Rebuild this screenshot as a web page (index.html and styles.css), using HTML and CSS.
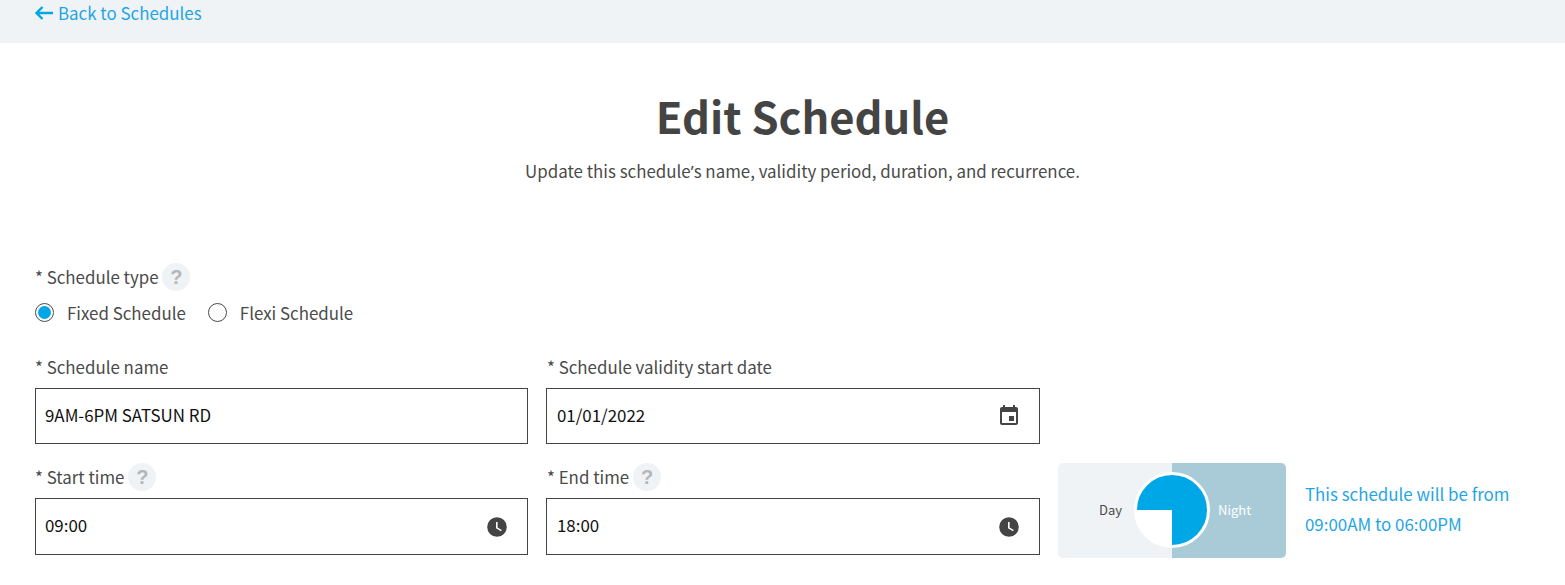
FILE: index.html
```html
<!DOCTYPE html>
<html lang="en">
<head>
    <meta charset="UTF-8">
    <title>Edit Schedule</title>
    <link rel="stylesheet" href="styles.css">
</head>
<body>
    <div class="topbar">
        <a class="back" href="javascript:;">
            <svg class="back-arrow" width="18" height="14" viewBox="0 0 18 14"><path d="M7.5 1 L1.5 7 L7.5 13 M1.5 7 H18" fill="none" stroke="#00a7e6" stroke-width="2.4"/></svg>
            <span>Back to Schedules</span>
        </a>
    </div>
    <div class="head">
        <h1>Edit Schedule</h1>
        <p>Update this schedule<span class="apos">’</span>s name, validity period, duration, and recurrence.</p>
    </div>
    <form class="form">
        <div class="label type-label">* Schedule type <span class="help">?</span></div>
        <div class="radios">
            <label class="radio"><span class="dot checked"></span>Fixed Schedule</label>
            <label class="radio"><span class="dot"></span>Flexi Schedule</label>
        </div>
        <div class="row row-name">
            <div class="field">
                <div class="label">* Schedule name</div>
                <div class="input">9AM-6PM SATSUN RD</div>
            </div>
            <div class="field">
                <div class="label">* Schedule validity start date</div>
                <div class="input">01/01/2022
                    <svg class="icon" width="24" height="24" viewBox="0 0 24 24"><path fill="#444" d="M17 12h-5v5h5v-5zM16 1v2H8V1H6v2H5c-1.11 0-1.99.9-1.99 2L3 19c0 1.1.89 2 2 2h14c1.1 0 2-.9 2-2V5c0-1.1-.9-2-2-2h-1V1h-2zm3 18H5V8h14v11z"/></svg>
                </div>
            </div>
        </div>
        <div class="row row-time">
            <div class="field">
                <div class="label">* Start time <span class="help">?</span></div>
                <div class="input tall">09:00
                    <svg class="icon" width="24" height="24" viewBox="0 0 24 24"><path fill="#444" d="M12 2.2a9.8 9.8 0 1 0 0 19.6 9.8 9.8 0 0 0 0-19.6zm4 14.1-5-3V7h1.6v5.4l4.2 2.5-.8 1.4z"/></svg>
                </div>
            </div>
            <div class="field">
                <div class="label">* End time <span class="help">?</span></div>
                <div class="input tall">18:00
                    <svg class="icon" width="24" height="24" viewBox="0 0 24 24"><path fill="#444" d="M12 2.2a9.8 9.8 0 1 0 0 19.6 9.8 9.8 0 0 0 0-19.6zm4 14.1-5-3V7h1.6v5.4l4.2 2.5-.8 1.4z"/></svg>
                </div>
            </div>
            <div class="clock">
                <div class="side day">Day</div>
                <div class="side night">Night</div>
                <div class="pie"></div>
            </div>
            <div class="summary">This schedule will be from<br>09:00AM to 06:00PM</div>
        </div>
    </form>
</body>
</html>
```

FILE: styles.css
```css
html, body {
    margin: 0;
    padding: 0;
    height: 585px;
    overflow: hidden;
}
body {
    font-family: "Noto Sans CJK SC", "Noto Sans", sans-serif;
    font-size: 16.9px;
    color: #4a4a4a;
    background: #fff;
}
.topbar {
    height: 43px;
    box-sizing: border-box;
    padding-left: 35px;
    background: #eff3f6;
}
.back {
    display: flex;
    align-items: center;
    gap: 5px;
    height: 25px;
    color: #1fa5e6;
    text-decoration: none;
}
.head {
    padding-left: 40px;
    text-align: center;
}
h1 {
    margin: 43px 0 0;
    font-size: 43.5px;
    line-height: 60px;
    font-weight: 700;
    color: #444;
}
.head p {
    margin: 12px 0 0;
    line-height: 26px;
}
.apos {
    font-family: "Noto Sans", sans-serif;
}
.form {
    padding: 0 35px;
    margin-top: 78px;
}
.label {
    display: flex;
    align-items: center;
    height: 28px;
    line-height: 26px;
    white-space: pre;
}
.help {
    width: 28px;
    height: 28px;
    border-radius: 50%;
    background: #eff3f6;
    color: #b4b6ba;
    font-family: "Liberation Sans", sans-serif;
    font-size: 20px;
    line-height: 28px;
    font-weight: 700;
    text-align: center;
}
.radios {
    display: flex;
    gap: 22px;
    margin-top: 7px;
}
.radio {
    display: flex;
    align-items: center;
    gap: 13px;
    height: 28px;
}
.dot {
    width: 19px;
    height: 19px;
    box-sizing: border-box;
    border: 1px solid #4a4a4a;
    border-radius: 50%;
    background: #fff;
}
.dot.checked {
    padding: 2px;
    background: #00a7e6 content-box;
}
.row {
    display: flex;
    gap: 18px;
}
.row-name {
    margin-top: 27px;
}
.row-time {
    margin-top: 19px;
}
.field {
    width: 493px;
}
.field + .field {
    width: 494px;
}
.field + .field .label {
    padding-left: 1px;
}
.field + .field .input {
    padding-left: 10px;
}
.row .label {
    margin-bottom: 7px;
}
.input {
    display: flex;
    align-items: center;
    justify-content: space-between;
    height: 56px;
    box-sizing: border-box;
    padding: 0 18px 4px 9px;
    border: 1px solid #444;
    color: #111;
}
.icon {
    margin-top: 4px;
}
.input.tall {
    height: 57px;
}
.clock {
    position: relative;
    display: flex;
    width: 228px;
    height: 95px;
    border-radius: 5px;
    overflow: hidden;
    font-size: 13px;
    line-height: 93px;
}
.side {
    width: 114px;
}
.day {
    padding-right: 50px;
    box-sizing: border-box;
    text-align: right;
    background: #eff3f6;
}
.night {
    padding-left: 46px;
    box-sizing: border-box;
    background: #a9cbd7;
    color: #fff;
}
.pie {
    position: absolute;
    left: 76px;
    top: 9px;
    width: 76px;
    height: 76px;
    border-radius: 50%;
    box-sizing: border-box;
    border: 3px solid #fff;
    background: conic-gradient(from -90deg, #00a7e6 0 270deg, #fff 270deg 360deg);
}
.summary {
    margin: 16px 0 0 1px;
    color: #1fa5e6;
    line-height: 30px;
    white-space: nowrap;
}
```
